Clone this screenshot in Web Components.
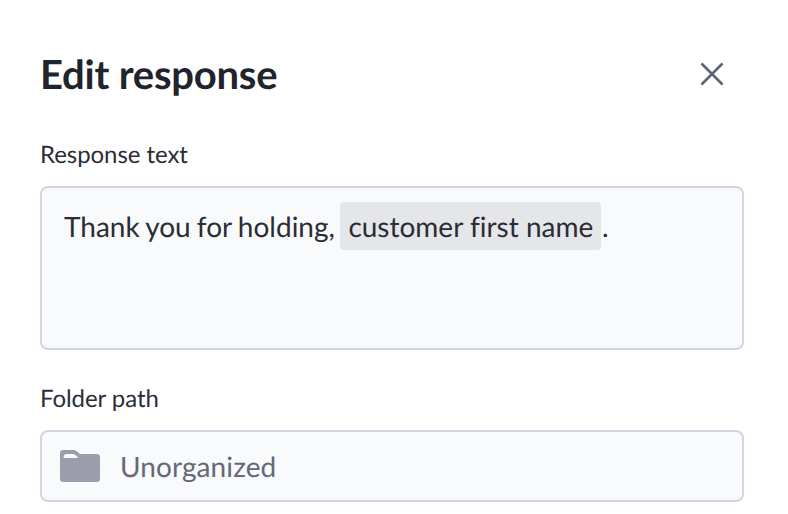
<!DOCTYPE html>
<html><head><meta charset="utf-8"><style>
html,body{margin:0;background:#fff;}
body{font-family:Lato,sans-serif;color:#21242c;overflow:hidden;height:514px;text-rendering:geometricPrecision;}
</style></head><body>
<edit-dialog></edit-dialog>
<template id="t-dialog"><style>
:host{display:flex;flex-direction:column;width:704px;padding:51px 44px 0 40px;}
header{display:flex;justify-content:space-between;align-items:center;height:46px;margin-bottom:43px;}
h1{margin:0;font:700 40px/46px Lato,sans-serif;letter-spacing:-.22px;color:#21242c;}
button{all:unset;display:flex;width:24px;height:24px;margin-right:20px;}
</style><header><h1>Edit response</h1><button aria-label="Close"><svg width="24" height="24" viewBox="0 0 24 24" fill="none" stroke="#5f6378" stroke-width="2.6"><path d="M1.5 1.5 22.500 22.500M22.500 1.500 1.500 22.500"/></svg></button></header>
<form-field label="Response text"><response-box>Thank you for holding, <var-chip>customer first name</var-chip>.</response-box></form-field>
<form-field label="Folder path" style="margin-top:34px"><folder-input>Unorganized</folder-input></form-field>
</template>
<template id="t-field"><style>
:host{display:flex;flex-direction:column;gap:16px;}
label{font:400 24px/30px Lato,sans-serif;letter-spacing:-.06px;color:#2b2e38;}
</style><label></label><slot></slot></template>
<template id="t-box"><style>
:host{display:block;box-sizing:border-box;height:164px;padding:14px 22px;background:#f9fafc;border:2px solid #d3d6e1;border-radius:8px;font:400 28px/48px Lato,sans-serif;font-variant-ligatures:none;word-spacing:-1px;color:#2a2d35;}
</style><slot></slot></template>
<template id="t-chip"><style>
:host{display:inline-block;margin-left:-1px;margin-right:1px;width:261px;box-sizing:border-box;padding:0 0 0 8.300px;word-spacing:0;background:#e5e6ea;border-radius:4px;line-height:48px;height:48px;}
</style><slot></slot></template>
<template id="t-folder"><style>
:host{display:flex;align-items:center;gap:20px;box-sizing:border-box;height:72px;padding:0 18px;background:#f9fafc;border:2px solid #d3d6e1;border-radius:8px;font:400 28px/36px Lato,sans-serif;letter-spacing:.1px;color:#646879;}
svg{flex:none;}
</style><svg width="40" height="32" viewBox="0 0 40 32"><path fill="#9b9dab" d="M3 0H13.500C15 0 16 .6 17 1.600L20 4H37C38.700 4 40 5.300 40 7V29C40 30.700 38.700 32 37 32H3C1.300 32 0 30.700 0 29V3C0 1.300 1.300 0 3 0Z"/><path fill="#f9fafc" d="M3.500 8C3.700 5.500 4.500 4 6.500 4H13C14.800 4 15.700 5.500 18.500 8Z"/></svg><span><slot></slot></span></template>
<script>
const def=(n,id,init)=>customElements.define(n,class extends HTMLElement{constructor(){super();this.attachShadow({mode:'open'}).append(document.getElementById(id).content.cloneNode(true));}connectedCallback(){init&&init(this);}});
def('form-field','t-field',e=>{e.shadowRoot.querySelector('label').textContent=e.getAttribute('label');});
def('response-box','t-box');def('var-chip','t-chip');def('folder-input','t-folder');def('edit-dialog','t-dialog');
</script></body></html>
